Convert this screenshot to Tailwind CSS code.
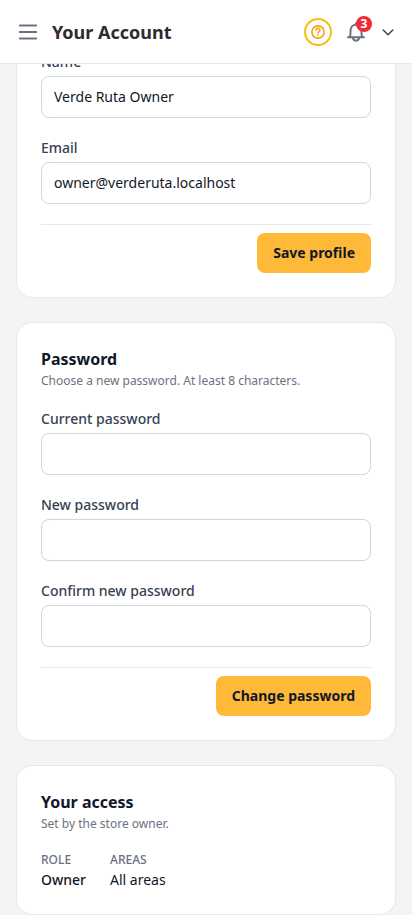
<!DOCTYPE html>
<html lang="en">
<head>
<meta charset="utf-8">
<meta name="viewport" content="width=device-width, initial-scale=1">
<title>Your Account</title>
<script src="https://cdn.jsdelivr.net/npm/@tailwindcss/browser@4"></script>
</head>
<body class="bg-gray-100 font-['Noto_Sans',sans-serif] text-sm text-gray-900">
<header class="sticky top-0 z-10 flex h-16 items-center border-b border-gray-200 bg-white px-4">
  <button type="button" aria-label="Open menu" class="text-gray-500">
    <svg class="size-6" viewBox="0 0 24 24" fill="none" stroke="currentColor" stroke-width="1.8" stroke-linecap="round"><path d="M3.750 5.500h16.500M3.750 12h16.500M3.750 18.500h16.500"/></svg>
  </button>
  <h1 class="ml-3 text-lg font-bold text-[#2d2d2d]">Your Account</h1>
  <div class="ml-auto flex items-center">
    <button type="button" aria-label="Help" class="flex size-7 items-center justify-center rounded-full border-2 border-[#fbbc12] text-[#f5a31a]">
      <svg class="size-4" viewBox="0 0 24 24" fill="none" stroke="currentColor" stroke-width="2.5" stroke-linecap="round" stroke-linejoin="round"><circle cx="12" cy="12" r="9.200"/><path d="M9.300 9.200a2.800 2.800 0 1 1 4.300 2.300c-1 .6-1.600 1.100-1.600 2.100M12 16.800v.2"/></svg>
    </button>
    <button type="button" aria-label="Notifications, 3 unread" class="relative ml-3 text-gray-500">
      <svg class="size-6" viewBox="0 0 24 24" fill="none" stroke="currentColor" stroke-width="2" stroke-linecap="round" stroke-linejoin="round"><path d="M4 17.200h16M5.600 17.200c.7-1.300.9-2.600.9-4.200v-2.300C6.500 7.200 8.900 4.800 12 4.800s5.500 2.400 5.500 5.900V13c0 1.600.2 2.900.9 4.200M12 4.800V3.300M8.900 17.600a3.100 3.100 0 0 0 6.200 0"/></svg>
      <span class="absolute -top-1 -right-1 flex size-4 items-center justify-center rounded-full bg-[#ef2b36] text-xs font-bold text-white">3</span>
    </button>
    <button type="button" aria-label="Account menu" class="ml-3 text-gray-700">
      <svg class="size-4" viewBox="0 0 16 16" fill="none" stroke="currentColor" stroke-width="1.500" stroke-linecap="round" stroke-linejoin="round"><path d="M3.200 6l4.800 4.700L12.800 6"/></svg>
    </button>
  </div>
</header>
<main class="flex flex-col gap-6 px-4">
  <form class="-mt-[37px] flex flex-col gap-5 rounded-2xl border border-gray-200 bg-white p-6">
    <div class="flex flex-col gap-1">
      <label for="name" class="font-medium text-gray-700">Name</label>
      <input id="name" type="text" value="Verde Ruta Owner" class="h-[42px] w-full rounded-lg border border-gray-300 bg-white px-3 pb-0.5">
    </div>
    <div class="flex flex-col gap-1">
      <label for="email" class="font-medium text-gray-700">Email</label>
      <input id="email" type="email" value="owner@verderuta.localhost" class="h-[42px] w-full rounded-lg border border-gray-300 bg-white px-3 pb-0.5">
    </div>
    <div class="flex justify-end border-t border-gray-200 pt-2">
      <button type="submit" class="h-10 rounded-lg bg-[#ffb938] px-4 font-bold text-gray-900">Save profile</button>
    </div>
  </form>
  <form class="flex flex-col gap-5 rounded-2xl border border-gray-200 bg-white p-6">
    <div>
      <h2 class="text-base font-bold">Password</h2>
      <p class="mt-0.5 text-xs text-gray-500">Choose a new password. At least 8 characters.</p>
    </div>
    <div class="flex flex-col gap-1">
      <label for="current" class="font-medium text-gray-700">Current password</label>
      <input id="current" type="password" class="h-[42px] w-full rounded-lg border border-gray-300 bg-white px-3 pb-0.5">
    </div>
    <div class="flex flex-col gap-1">
      <label for="new" class="font-medium text-gray-700">New password</label>
      <input id="new" type="password" class="h-[42px] w-full rounded-lg border border-gray-300 bg-white px-3 pb-0.5">
    </div>
    <div class="flex flex-col gap-1">
      <label for="confirm" class="font-medium text-gray-700">Confirm new password</label>
      <input id="confirm" type="password" class="h-[42px] w-full rounded-lg border border-gray-300 bg-white px-3 pb-0.5">
    </div>
    <div class="flex justify-end border-t border-gray-200 pt-2">
      <button type="submit" class="h-10 rounded-lg bg-[#ffb938] px-4 font-bold text-gray-900">Change password</button>
    </div>
  </form>
  <section class="rounded-2xl border border-gray-200 bg-white p-6">
    <h2 class="text-base font-bold">Your access</h2>
    <p class="mt-0.5 text-xs text-gray-500">Set by the store owner.</p>
    <dl class="mt-5 flex gap-6">
      <div>
        <dt class="text-xs font-medium text-gray-500 uppercase">Role</dt>
        <dd class="mt-0.5 font-medium">Owner</dd>
      </div>
      <div>
        <dt class="text-xs font-medium text-gray-500 uppercase">Areas</dt>
        <dd class="mt-0.5">All areas</dd>
      </div>
    </dl>
  </section>
</main>
</body>
</html>
